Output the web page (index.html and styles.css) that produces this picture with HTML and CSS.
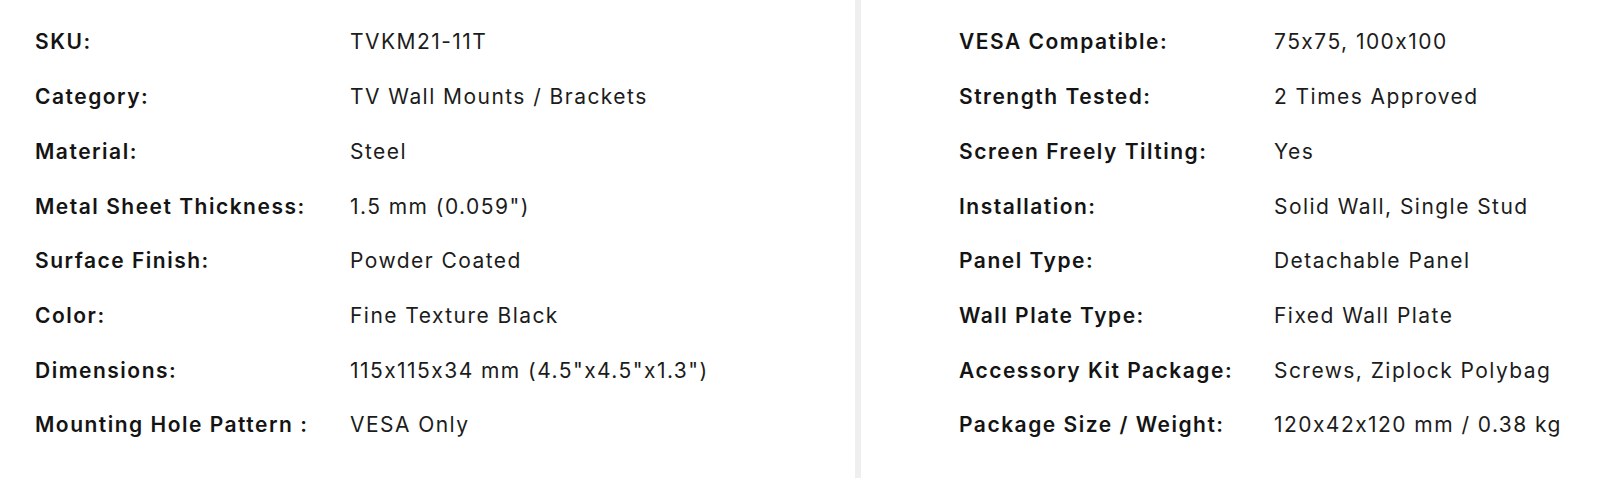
FILE: index.html
```html
<!DOCTYPE html>
<html lang="en">
<head>
<meta charset="utf-8">
<title>Specifications</title>
<link rel="stylesheet" href="styles.css">
</head>
<body>
<div class="specs">
  <div class="panel panel-left">
    <dl class="spec-list">
      <div class="row"><dt>SKU:</dt><dd>TVKM21-11T</dd></div>
      <div class="row"><dt>Category:</dt><dd>TV Wall Mounts / Brackets</dd></div>
      <div class="row"><dt>Material:</dt><dd>Steel</dd></div>
      <div class="row"><dt>Metal Sheet Thickness:</dt><dd>1.5 mm (0.059")</dd></div>
      <div class="row"><dt>Surface Finish:</dt><dd>Powder Coated</dd></div>
      <div class="row"><dt>Color:</dt><dd>Fine Texture Black</dd></div>
      <div class="row"><dt>Dimensions:</dt><dd>115x115x34 mm (4.5"x4.5"x1.3")</dd></div>
      <div class="row"><dt>Mounting Hole Pattern :</dt><dd>VESA Only</dd></div>
    </dl>
  </div>
  <div class="panel panel-right">
    <dl class="spec-list">
      <div class="row"><dt>VESA Compatible:</dt><dd>75x75, 100x100</dd></div>
      <div class="row"><dt>Strength Tested:</dt><dd>2 Times Approved</dd></div>
      <div class="row"><dt>Screen Freely Tilting:</dt><dd>Yes</dd></div>
      <div class="row"><dt>Installation:</dt><dd>Solid Wall, Single Stud</dd></div>
      <div class="row"><dt>Panel Type:</dt><dd>Detachable Panel</dd></div>
      <div class="row"><dt>Wall Plate Type:</dt><dd>Fixed Wall Plate</dd></div>
      <div class="row"><dt>Accessory Kit Package:</dt><dd>Screws, Ziplock Polybag</dd></div>
      <div class="row"><dt>Package Size / Weight:</dt><dd>120x42x120 mm / 0.38 kg</dd></div>
    </dl>
  </div>
</div>
</body>
</html>
```

FILE: styles.css
```css
html, body {
  margin: 0;
  padding: 0;
  background: #ffffff;
}
body {
  font-family: Inter, "Open Sans", "DejaVu Sans", sans-serif;
  font-size: 21px;
  color: #1a1a1a;
  width: 1600px;
  height: 478px;
  overflow: hidden;
}
.specs {
  display: flex;
  height: 478px;
}
.panel {
  box-sizing: border-box;
  padding-top: 14.65px;
}
.panel-left {
  width: 855px;
  padding-left: 35px;
}
.panel-right {
  flex: 1;
  border-left: 6px solid #efefef;
  padding-left: 98px;
}
.spec-list {
  margin: 0;
  display: grid;
  grid-auto-rows: 54.7px;
}
.row {
  display: grid;
  grid-template-columns: 315px auto;
  align-items: center;
}
dt {
  font-weight: 600;
  color: #141414;
  letter-spacing: 1.5px;
}
dd {
  margin: 0;
  font-weight: 400;
  color: #1c1c1c;
  letter-spacing: 1.45px;
}
```
